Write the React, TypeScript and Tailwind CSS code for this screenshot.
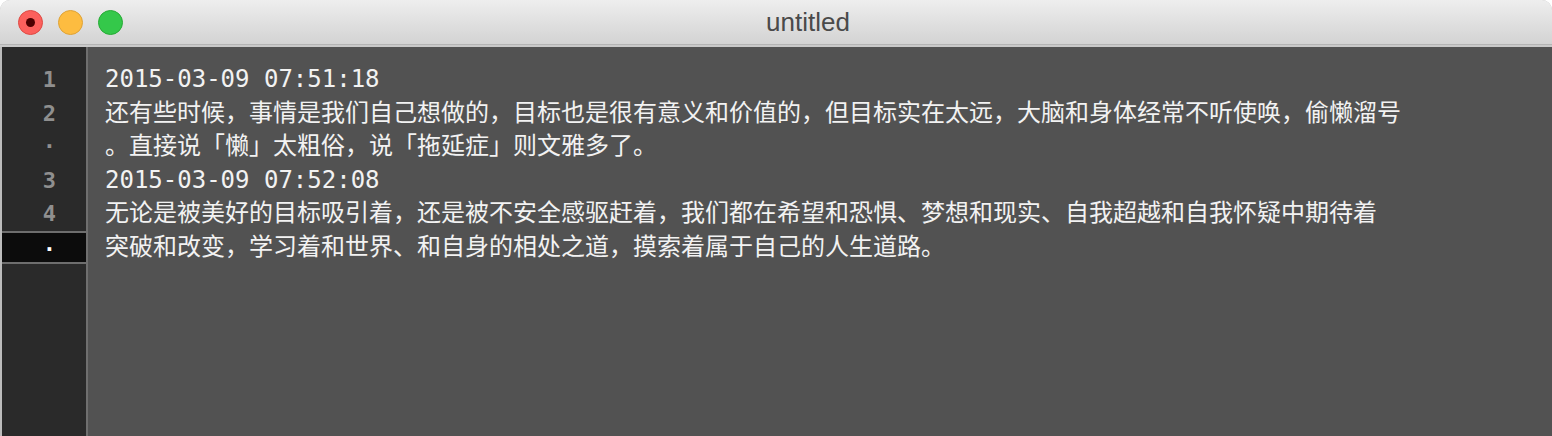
const lines: { num: string; text: string; active?: boolean }[] = [
  { num: '1', text: '2015-03-09 07:51:18' },
  { num: '2', text: '还有些时候，事情是我们自己想做的，目标也是很有意义和价值的，但目标实在太远，大脑和身体经常不听使唤，偷懒溜号' },
  { num: '·', text: '。直接说「懒」太粗俗，说「拖延症」则文雅多了。' },
  { num: '3', text: '2015-03-09 07:52:08' },
  { num: '4', text: '无论是被美好的目标吸引着，还是被不安全感驱赶着，我们都在希望和恐惧、梦想和现实、自我超越和自我怀疑中期待着' },
  { num: '·', text: '突破和改变，学习着和世界、和自身的相处之道，摸索着属于自己的人生道路。', active: true },
]

function TrafficLight({ color, border, dot }: { color: string; border: string; dot?: boolean }) {
  return (
    <div className={`flex size-[25px] items-center justify-center rounded-full border ${color} ${border}`}>
      {dot && <div className="size-[9px] rounded-full bg-[#4d0000]" />}
    </div>
  )
}

export default function App() {
  return (
    <div className="flex h-[436px] w-full flex-col overflow-hidden rounded-t-[10px] bg-[#bcbcbc]">
      {/* title bar */}
      <div className="relative flex h-[44px] shrink-0 items-center bg-gradient-to-b from-[#eeeeee] to-[#d3d3d3] pl-[18px]">
        <div className="flex gap-[15px]">
          <TrafficLight color="bg-[#fc605c]" border="border-[#de4a43]" dot />
          <TrafficLight color="bg-[#fdbc40]" border="border-[#dea236]" />
          <TrafficLight color="bg-[#34c84a]" border="border-[#27aa35]" />
        </div>
        <div
          className="absolute left-[766px] top-[5px] text-[26px] leading-[34px] text-[#4a4a4a]"
          style={{ fontFamily: '"Liberation Sans", Arial, sans-serif' }}
        >
          untitled
        </div>
      </div>
      <div className="h-[3px] shrink-0 border-t border-[#b4b4b4] bg-[#c9c9c9]" />

      {/* editor */}
      <div className="flex min-h-0 flex-1 pl-[2px]">
        <div className="w-[84px] shrink-0 bg-[#2a2a2a] pt-[16px]">
          {lines.map((l, i) => (
            <div
              key={i}
              className={`h-[33.5px] pr-[30px] text-right text-[22px] font-bold leading-[33.5px] ${
                l.active ? 'border-y-2 border-[#6e6e6e] bg-[#0c0c0c] leading-[29.5px] text-white' : 'text-[#8f8f8f]'
              }`}
              style={{ fontFamily: '"DejaVu Sans Mono", monospace' }}
            >
              {l.num}
            </div>
          ))}
        </div>
        <div className="w-[2px] shrink-0 bg-[#6f6f6f]" />
        <div
          className="flex-1 bg-[#525252] pl-[17px] pt-[16px] text-[24px] text-[#f2f2f2]"
          style={{ fontFamily: '"DejaVu Sans Mono", "Noto Sans CJK SC", monospace' }}
        >
          {lines.map((l, i) => (
            <div key={i} className="h-[33.5px] whitespace-nowrap leading-[33.5px]">
              {l.text}
            </div>
          ))}
        </div>
      </div>
    </div>
  )
}
